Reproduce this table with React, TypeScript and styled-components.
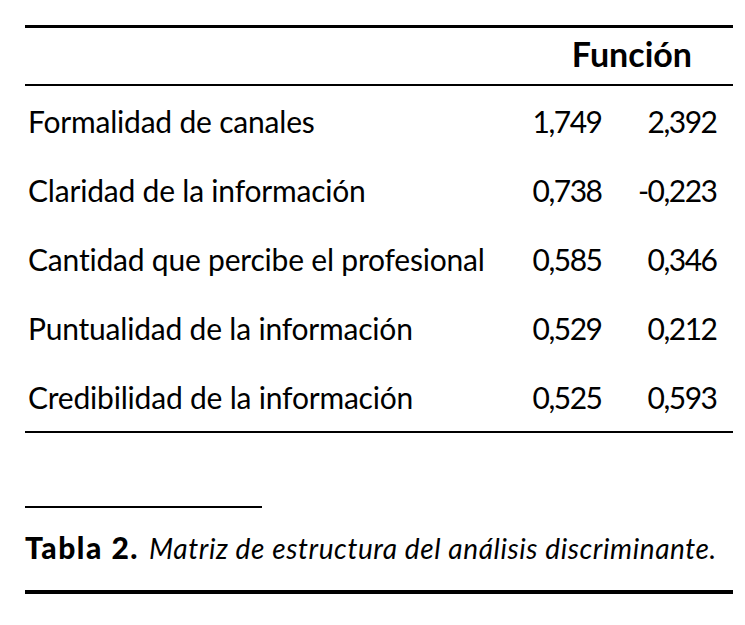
import React from "react";
import styled, { createGlobalStyle } from "styled-components";

const Global = createGlobalStyle`
  html, body { margin: 0; padding: 0; background: #fff; }
  body { font-family: Lato, "Open Sans", sans-serif; color: #000; }
`;

const Page = styled.div`
  width: 745px;
  height: 625px;
  box-sizing: border-box;
  padding: 25px 12px 0 25px;
`;

const Table = styled.div`
  border-top: 3px solid #000;
  border-bottom: 2px solid #000;
`;

const HeadRow = styled.div`
  display: grid;
  grid-template-columns: minmax(0, 1fr) 230px;
  height: 56px;
  border-bottom: 2px solid #000;
  padding-right: 15px;
`;

const HeadCell = styled.div`
  grid-column: 2;
  text-align: right;
  padding-right: 26px;
  font-weight: 700;
  font-size: 34px;
  line-height: 52px;
  white-space: nowrap;
`;

const Row = styled.div`
  display: grid;
  grid-template-columns: minmax(0, 1fr) 115px 115px;
  height: 68px;
  padding-right: 15px;
  font-size: 30px;
  line-height: 68px;
  padding-top: 1px;
`;

const Label = styled.div`
  padding-left: 3px;
  white-space: nowrap;
  letter-spacing: -0.2px;
`;

const Num = styled.div`
  text-align: right;
  white-space: nowrap;
  letter-spacing: -1.5px;
  padding-right: 1.5px;
`;

const Note = styled.div`
  width: 237px;
  border-top: 2px solid #000;
  margin-top: 73px;
`;

const Caption = styled.div`
  margin-top: 19px;
  font-size: 28px;
  line-height: 40px;
  white-space: nowrap;
`;

const CapLabel = styled.span`
  font-weight: 900;
  font-size: 30px;
  letter-spacing: 1.5px;
  margin-right: 10px;
`;

const CapText = styled.span`
  font-style: italic;
  letter-spacing: 0.6px;
`;

const Rule = styled.div`
  border-top: 4px solid #000;
  margin-top: 22px;
`;

const rows: [string, string, string][] = [
  ["Formalidad de canales", "1,749", "2,392"],
  ["Claridad de la información", "0,738", "-0,223"],
  ["Cantidad que percibe el profesional", "0,585", "0,346"],
  ["Puntualidad de la información", "0,529", "0,212"],
  ["Credibilidad de la información", "0,525", "0,593"],
];

export default function App() {
  return (
    <>
      <Global />
      <Page>
        <Table>
          <HeadRow>
            <HeadCell>Función</HeadCell>
          </HeadRow>
          {rows.map(([l, a, b]) => (
            <Row key={l}>
              <Label>{l}</Label>
              <Num>{a}</Num>
              <Num>{b}</Num>
            </Row>
          ))}
        </Table>
        <Note />
        <Caption>
          <CapLabel>Tabla 2.</CapLabel>
          <CapText>Matriz de estructura del análisis discriminante.</CapText>
        </Caption>
        <Rule />
      </Page>
    </>
  );
}
